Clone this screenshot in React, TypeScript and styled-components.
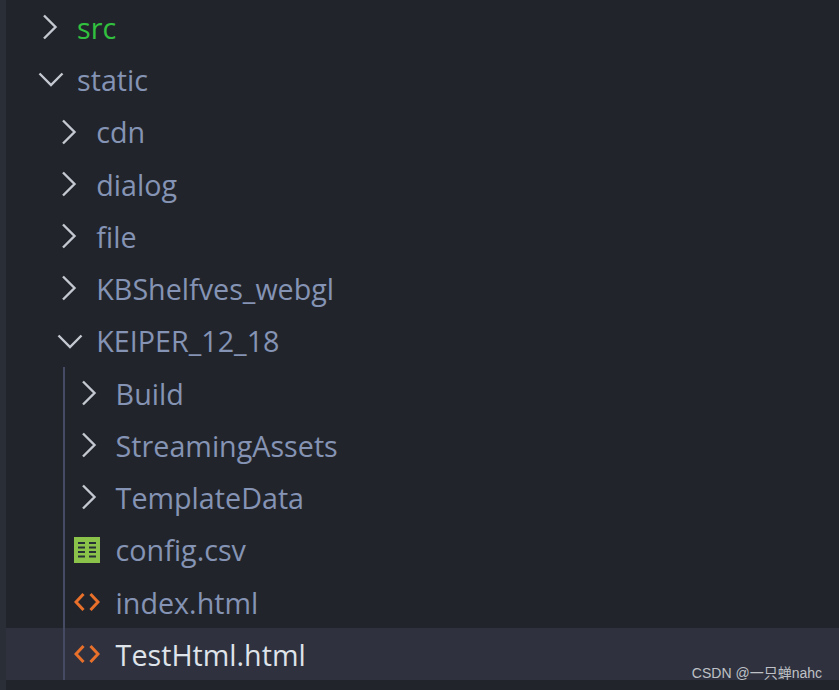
import React from 'react';
import styled, { createGlobalStyle } from 'styled-components';

const GlobalStyle = createGlobalStyle`
  html, body {
    margin: 0;
    padding: 0;
    background: #21252b;
  }
`;

type Kind = 'closed' | 'open' | 'csv' | 'html';

const Chevron: React.FC<{ open: boolean }> = ({ open }) => (
  <ChevronSvg viewBox="0 0 28 28">
    <path d={open ? 'M2.5 8.5 L14 20 L25.5 8.5' : 'M7 2.5 L18.5 14 L7 25.5'} />
  </ChevronSvg>
);

const CsvIcon = () => (
  <svg width="26" height="26" viewBox="0 0 26 26">
    <rect width="26" height="26" fill="#8bc34a" />
    <path
      d="M4 6h7M15 6h7M4 10.5h7M15 10.5h7M4 15h7M15 15h7M4 19.5h7M15 19.5h7"
      stroke="#263238"
      strokeWidth="2"
    />
  </svg>
);

const HtmlIcon = () => (
  <svg width="26" height="20" viewBox="0 0 26 20" fill="none">
    <path
      d="M9.5 2 L2 10 L9.5 18 M16.5 2 L24 10 L16.5 18"
      stroke="#e8702a"
      strokeWidth="3"
    />
  </svg>
);

const Row: React.FC<{
  name: string;
  kind: Kind;
  depth: number;
  green?: boolean;
  active?: boolean;
}> = ({ name, kind, depth, green, active }) => (
  <RowBox $depth={depth} $active={active}>
    <IconSlot $file={kind === 'csv' || kind === 'html'}>
      {kind === 'closed' && <Chevron open={false} />}
      {kind === 'open' && <Chevron open />}
      {kind === 'csv' && <CsvIcon />}
      {kind === 'html' && <HtmlIcon />}
    </IconSlot>
    <Label $green={green} $active={active}>
      {name}
    </Label>
  </RowBox>
);

export default function App() {
  return (
    <Page>
      <GlobalStyle />
      <Tree>
        <Row name="src" kind="closed" depth={0} green />
        <Row name="static" kind="open" depth={0} />
        <Row name="cdn" kind="closed" depth={1} />
        <Row name="dialog" kind="closed" depth={1} />
        <Row name="file" kind="closed" depth={1} />
        <Row name="KBShelfves_webgl" kind="closed" depth={1} />
        <Row name="KEIPER_12_18" kind="open" depth={1} />
        <Group>
          <Row name="Build" kind="closed" depth={2} />
          <Row name="StreamingAssets" kind="closed" depth={2} />
          <Row name="TemplateData" kind="closed" depth={2} />
          <Row name="config.csv" kind="csv" depth={2} />
          <Row name="index.html" kind="html" depth={2} />
          <Row name="TestHtml.html" kind="html" depth={2} active />
        </Group>
      </Tree>
      <Watermark>CSDN @一只蝉nahc</Watermark>
    </Page>
  );
}

const Page = styled.div`
  position: relative;
  width: 839px;
  height: 690px;
  overflow: hidden;
  box-sizing: border-box;
  padding: 1px 0 0 6px;
  background: #21252b;
  box-shadow: inset 6px 0 0 #2a2e37;
`;

const Tree = styled.div`
  display: flex;
  flex-direction: column;
`;

const Group = styled.div`
  position: relative;

  &::before {
    content: '';
    position: absolute;
    z-index: 1;
    left: 57px;
    top: 0;
    bottom: 0;
    width: 2px;
    background: #474a63;
  }
`;

const RowBox = styled.div<{ $depth: number; $active?: boolean }>`
  display: flex;
  align-items: center;
  height: 52.25px;
  padding-left: ${(p) => 31 + p.$depth * 19.3}px;
  background: ${(p) => (p.$active ? '#2f323e' : 'transparent')};
`;

const IconSlot = styled.div<{ $file: boolean }>`
  display: flex;
  align-items: center;
  justify-content: center;
  flex: none;
  width: 28px;
  height: 28px;
  margin-left: ${(p) => (p.$file ? '-3px' : '0')};
  margin-right: ${(p) => (p.$file ? '15px' : '12px')};
`;

const ChevronSvg = styled.svg`
  width: 28px;
  height: 28px;
  fill: none;
  stroke: #c4c8d0;
  stroke-width: 2.4;
`;

const Label = styled.span<{ $green?: boolean; $active?: boolean }>`
  font-family: 'Open Sans', 'Noto Sans', sans-serif;
  font-size: 28.7px;
  line-height: 1;
  padding-top: 2px;
  white-space: nowrap;
  color: ${(p) => (p.$green ? '#32c13f' : p.$active ? '#dfe3ea' : '#8593b4')};
`;

const Watermark = styled.div`
  position: absolute;
  right: 17px;
  bottom: 8px;
  font-family: 'Liberation Sans', 'Noto Sans CJK SC', sans-serif;
  font-size: 14px;
  line-height: 17px;
  color: #bfc1c6;
`;
